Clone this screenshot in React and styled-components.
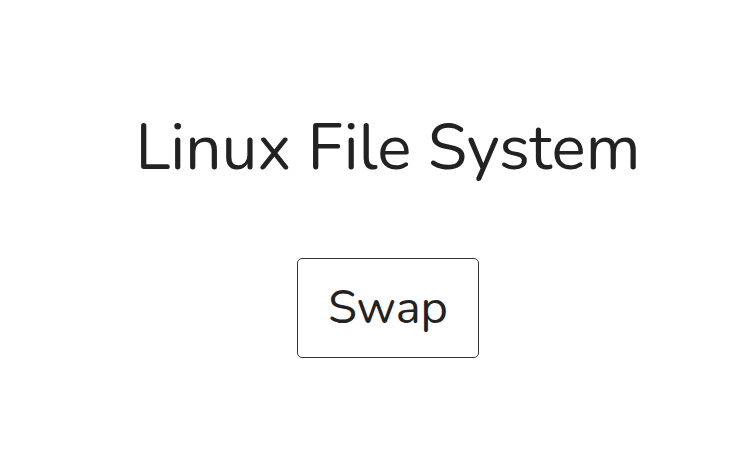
import React from "react";
import styled, { createGlobalStyle } from "styled-components";

const GlobalStyle = createGlobalStyle`
  body {
    margin: 0;
    background: #ffffff;
    font-family: Nunito, Lato, "Noto Sans", sans-serif;
    color: #222222;
  }
`;

const Page = styled.div`
  display: flex;
  flex-direction: column;
  align-items: center;
  padding-top: 104px;
  padding-left: 21px;
`;

const Title = styled.h1`
  margin: 0;
  font-size: 64px;
  font-weight: 400;
  line-height: 88px;
`;

const SwapButton = styled.button`
  margin-top: 66px;
  width: 182px;
  height: 100px;
  padding: 0 0 2px;
  background: #ffffff;
  border: 1px solid #333333;
  border-radius: 5px;
  font-family: inherit;
  font-size: 47px;
  color: #222222;
  cursor: pointer;
`;

function App() {
    return (
        <>
            <GlobalStyle/>
            <Page>
                <Title>Linux File System</Title>
                <SwapButton>Swap</SwapButton>
            </Page>
        </>
    );
}

export default App;
